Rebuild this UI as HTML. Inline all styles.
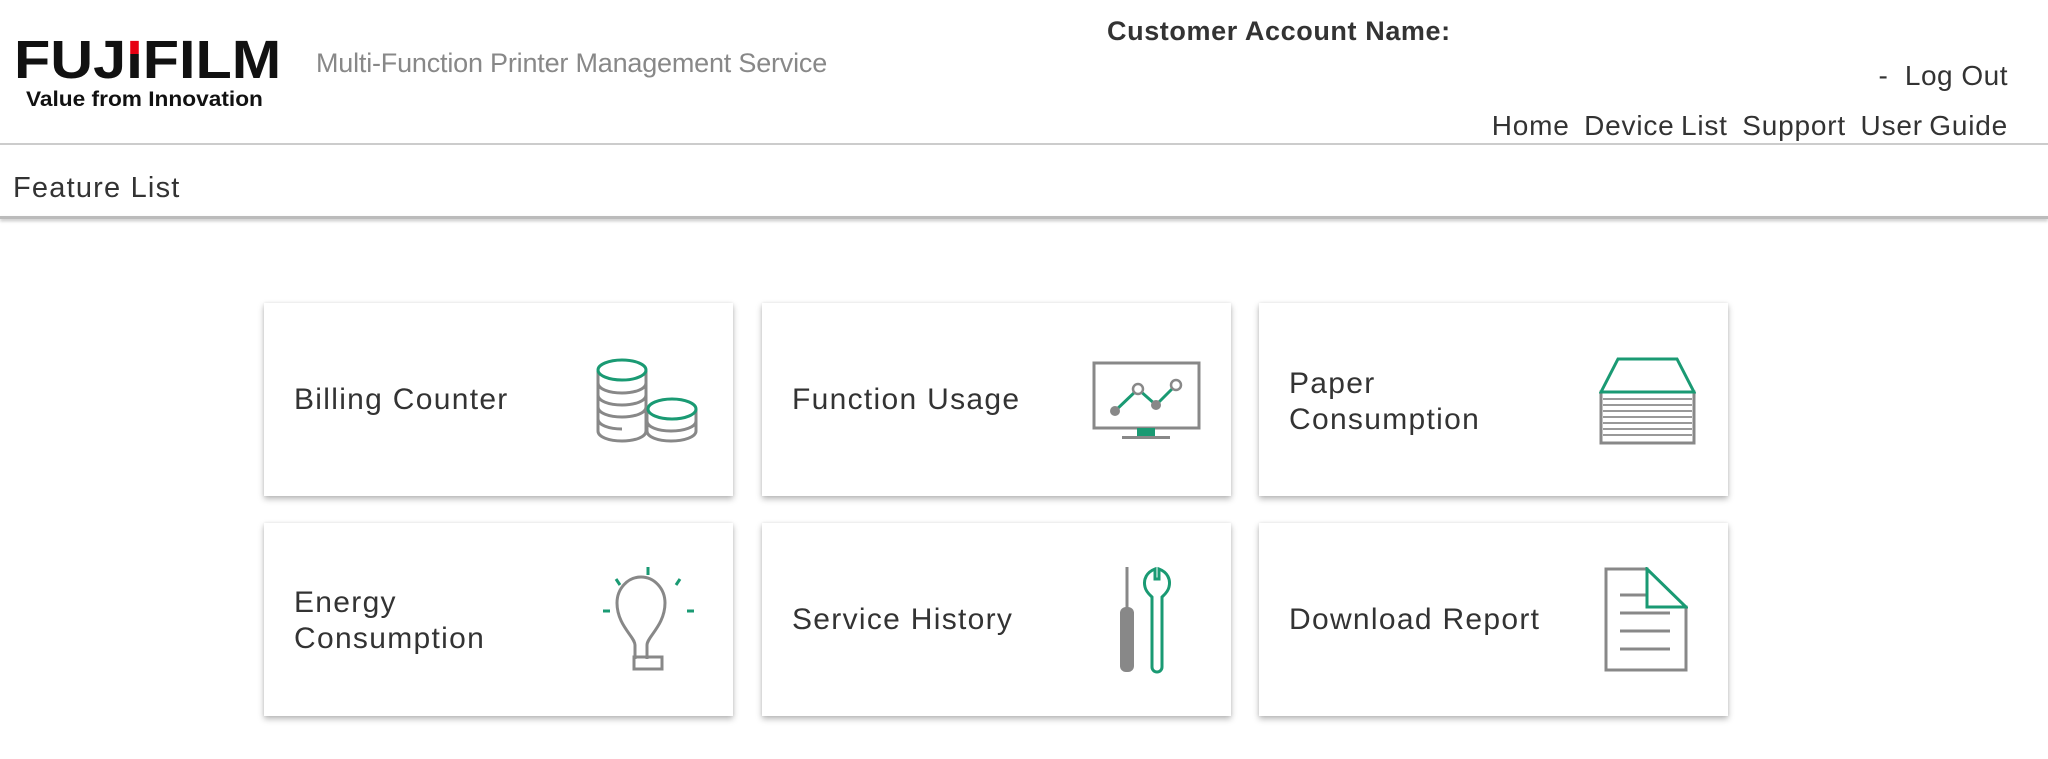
<!DOCTYPE html>
<html><head><meta charset="utf-8"><style>
*{margin:0;padding:0;box-sizing:border-box}
html,body{width:2048px;height:759px;background:#fff;overflow:hidden;font-family:"Liberation Sans",sans-serif;color:#333}
.a{position:absolute;white-space:nowrap}
.card{position:absolute;width:469px;height:193px;background:#fff;box-shadow:0 3px 6px rgba(0,0,0,.28),0 0 3px rgba(0,0,0,.08)}
.card .t{position:absolute;left:30px;font-size:30px;line-height:36px;color:#333;letter-spacing:1.3px}
.card svg{position:absolute}
.ri{background:linear-gradient(#e60012 0 40%,#111 40%);-webkit-background-clip:text;background-clip:text;color:transparent}
</style></head><body>
<div class="a" style="left:14px;top:30px;font-size:54px;font-weight:bold;color:#111;letter-spacing:0px;line-height:60px;transform:scaleX(1.1);transform-origin:left">FUJ<span class="ri">I</span>FILM</div>
<div class="a" style="left:26px;top:88px;font-size:21px;font-weight:bold;color:#111;line-height:24px;transform:scaleX(1.08);transform-origin:left">Value from Innovation</div>
<div class="a" style="left:316px;top:48px;font-size:27px;color:#888;line-height:30px;letter-spacing:-.2px">Multi-Function Printer Management Service</div>
<div class="a" style="left:1107px;top:16px;font-size:27px;font-weight:bold;color:#333;line-height:30px;letter-spacing:.6px">Customer Account Name:</div>
<div class="a" style="right:40px;top:61px;font-size:28px;color:#333;line-height:30px;letter-spacing:.5px">-&nbsp; Log Out</div>
<div class="a" style="right:40px;top:111px;font-size:28px;color:#333;line-height:30px;letter-spacing:.8px;word-spacing:6px">Home Device&#8201;List Support User&#8201;Guide</div>
<div class="a" style="left:0;top:143px;width:2048px;height:2px;background:#ccc"></div>
<div class="a" style="left:13px;top:172px;font-size:29px;color:#333;line-height:32px;letter-spacing:1.2px">Feature List</div>
<div class="a" style="left:0;top:216px;width:2048px;height:3px;background:#bbb;box-shadow:0 2px 3px rgba(0,0,0,.25)"></div>

<div class="card" style="left:264px;top:303px"><div class="t" style="top:79px">Billing Counter</div>
<svg style="left:331px;top:54px" width="106" height="87" viewBox="0 0 106 87" fill="none" stroke-width="3">
<g stroke="#888"><path d="M3 14v60c0 6 11 10 24 10s24-4 24-10V14"/><path d="M3 26c0 6 11 10 24 10s24-4 24-10M3 38c0 6 11 10 24 10s24-4 24-10M3 50c0 6 11 10 24 10s24-4 24-10M3 62c0 6 11 10 24 10"/>
<path d="M52 52v22c0 6 11 10 24 10s25-4 25-10V52M52 64c0 6 11 10 24 10s25-4 25-10"/></g>
<ellipse cx="27" cy="13" rx="24" ry="10" stroke="#1a9a73"/><ellipse cx="77" cy="52" rx="24" ry="10" stroke="#1a9a73" fill="#fff"/></svg></div>

<div class="card" style="left:762px;top:303px"><div class="t" style="top:79px">Function Usage</div>
<svg style="left:330px;top:58px" width="109" height="80" viewBox="0 0 109 80" fill="none">
<rect x="2" y="2" width="105" height="65" stroke="#888" stroke-width="3"/>
<rect x="45" y="67" width="18" height="9" fill="#1a9a73"/><rect x="30" y="75" width="48" height="3" fill="#888"/>
<path d="M23 50L46 28L64 44L84 24" stroke="#1a9a73" stroke-width="3"/>
<circle cx="23" cy="50" r="5" fill="#888"/><circle cx="46" cy="28" r="5" fill="#fff" stroke="#888" stroke-width="2.5"/><circle cx="64" cy="44" r="5" fill="#888"/><circle cx="84" cy="24" r="5" fill="#fff" stroke="#888" stroke-width="2.5"/></svg></div>

<div class="card" style="left:1259px;top:303px"><div class="t" style="top:63px;line-height:36px">Paper<br>Consumption</div>
<svg style="left:340px;top:54px" width="97" height="88" viewBox="0 0 97 88" fill="none">
<rect x="2" y="35" width="93" height="51" stroke="#888" stroke-width="3"/>
<path d="M4 42h89M4 48h89M4 54h89M4 60h89M4 66h89M4 72h89M4 78h89" stroke="#999" stroke-width="2"/>
<path d="M2 35L19 2H78L95 35Z" stroke="#1a9a73" stroke-width="3" fill="#fff"/></svg></div>

<div class="card" style="left:264px;top:523px"><div class="t" style="top:62px">Energy<br>Consumption</div>
<svg style="left:337px;top:44px" width="96" height="105" viewBox="0 0 96 105" fill="none" stroke-width="3">
<path d="M34 92V78c0-8-18-20-18-42a24 26 0 0 1 48 0c0 22-18 34-18 42v14" stroke="#888"/>
<rect x="33" y="90" width="28" height="12" stroke="#888"/>
<g stroke="#1a9a73"><path d="M47 0v8M15 12l4 6M79 12l-4 6M2 44h7M86 44h7"/></g></svg></div>

<div class="card" style="left:762px;top:523px"><div class="t" style="top:79px">Service History</div>
<svg style="left:355px;top:42px" width="62" height="109" viewBox="0 0 62 109" fill="none">
<path d="M10 2v40" stroke="#888" stroke-width="3"/><rect x="3" y="42" width="14" height="65" rx="6" fill="#888"/>
<path d="M38 4c-8 3-12 10-10 18 1 5 5 8 7 10v70a5 5 0 0 0 10 0V32c2-2 6-5 7-10 2-8-2-15-10-18v10h-4z" stroke="#1a9a73" stroke-width="3"/></svg></div>

<div class="card" style="left:1259px;top:523px"><div class="t" style="top:79px">Download Report</div>
<svg style="left:345px;top:44px" width="84" height="105" viewBox="0 0 84 105" fill="none">
<path d="M2 2H43V40H82V103H2Z" stroke="#888" stroke-width="3"/>
<path d="M16 28H42M16 46H66M16 64H66M16 82H66" stroke="#888" stroke-width="3"/>
<path d="M43 2L82 40H43Z" stroke="#1a9a73" stroke-width="3" fill="#fff"/></svg></div>
</body></html>
